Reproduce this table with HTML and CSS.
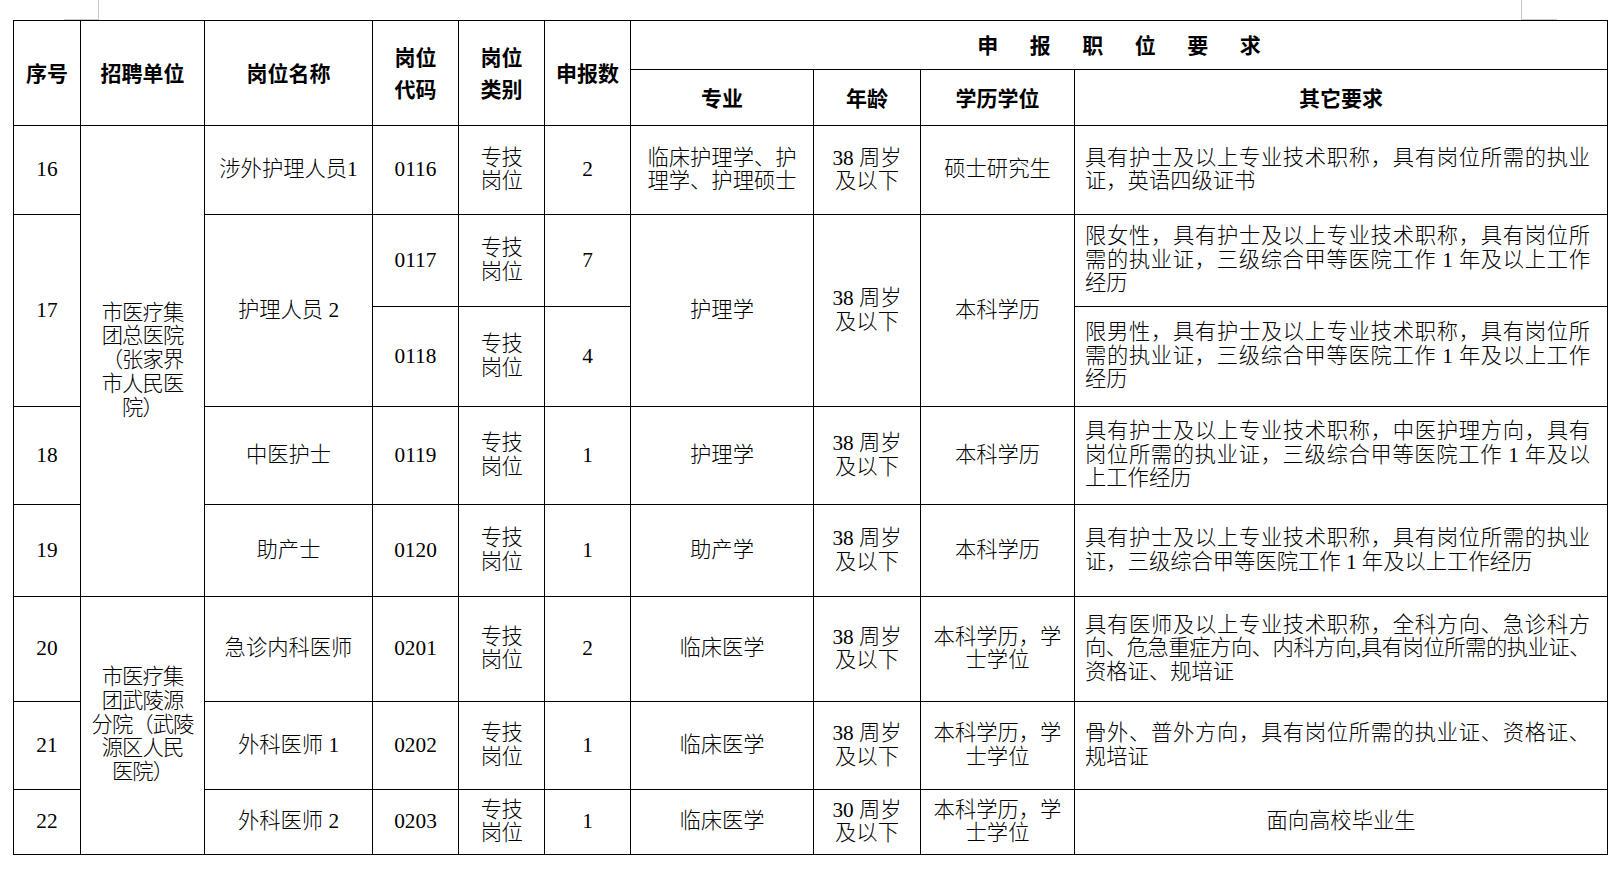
FILE: index.html
```html
<!DOCTYPE html>
<html lang="zh-CN">
<head>
<meta charset="utf-8">
<title>申报职位要求</title>
<link rel="stylesheet" href="styles.css">
</head>
<body>
<div class="marks"><div class="mark mark-l"></div><div class="mark mark-r"></div></div>
<div class="sheet">
  <div class="h r2"><div class="t">序号</div></div>
  <div class="h r2"><div class="t">招聘单位</div></div>
  <div class="h r2"><div class="t">岗位名称</div></div>
  <div class="h r2"><div class="t">岗位<br>代码</div></div>
  <div class="h r2"><div class="t">岗位<br>类别</div></div>
  <div class="h r2"><div class="t">申报数</div></div>
  <div class="h c4"><div class="t wide">申报职位要求</div></div>
  <div class="h"><div class="t">专业</div></div>
  <div class="h"><div class="t">年龄</div></div>
  <div class="h"><div class="t">学历学位</div></div>
  <div class="h"><div class="t">其它要求</div></div>

  <div class="d"><div class="t">16</div></div>
  <div class="d r5"><div class="t unit">市医疗集<br>团总医院<br>（张家界<br>市人民医<br>院）</div></div>
  <div class="d"><div class="t">涉外护理人员1</div></div>
  <div class="d"><div class="t">0116</div></div>
  <div class="d"><div class="t sm">专技<br>岗位</div></div>
  <div class="d"><div class="t">2</div></div>
  <div class="d"><div class="t">临床护理学、护<br>理学、护理硕士</div></div>
  <div class="d"><div class="t">38 周岁<br>及以下</div></div>
  <div class="d"><div class="t">硕士研究生</div></div>
  <div class="o"><div class="t"><span class="j">具有护士及以上专业技术职称，具有岗位所需的执业</span><span>证，英语四级证书</span></div></div>

  <div class="d r2"><div class="t">17</div></div>
  <div class="d r2"><div class="t">护理人员 2</div></div>
  <div class="d"><div class="t">0117</div></div>
  <div class="d"><div class="t sm">专技<br>岗位</div></div>
  <div class="d"><div class="t">7</div></div>
  <div class="d r2"><div class="t">护理学</div></div>
  <div class="d r2"><div class="t">38 周岁<br>及以下</div></div>
  <div class="d r2"><div class="t">本科学历</div></div>
  <div class="o"><div class="t"><span class="j">限女性，具有护士及以上专业技术职称，具有岗位所</span><span class="j">需的执业证，三级综合甲等医院工作 1 年及以上工作</span><span>经历</span></div></div>
  <div class="d"><div class="t">0118</div></div>
  <div class="d"><div class="t sm">专技<br>岗位</div></div>
  <div class="d"><div class="t">4</div></div>
  <div class="o"><div class="t"><span class="j">限男性，具有护士及以上专业技术职称，具有岗位所</span><span class="j">需的执业证，三级综合甲等医院工作 1 年及以上工作</span><span>经历</span></div></div>

  <div class="d"><div class="t">18</div></div>
  <div class="d"><div class="t">中医护士</div></div>
  <div class="d"><div class="t">0119</div></div>
  <div class="d"><div class="t sm">专技<br>岗位</div></div>
  <div class="d"><div class="t">1</div></div>
  <div class="d"><div class="t">护理学</div></div>
  <div class="d"><div class="t">38 周岁<br>及以下</div></div>
  <div class="d"><div class="t">本科学历</div></div>
  <div class="o"><div class="t"><span class="j">具有护士及以上专业技术职称，中医护理方向，具有</span><span class="j">岗位所需的执业证，三级综合甲等医院工作 1 年及以</span><span>上工作经历</span></div></div>

  <div class="d"><div class="t">19</div></div>
  <div class="d"><div class="t">助产士</div></div>
  <div class="d"><div class="t">0120</div></div>
  <div class="d"><div class="t sm">专技<br>岗位</div></div>
  <div class="d"><div class="t">1</div></div>
  <div class="d"><div class="t">助产学</div></div>
  <div class="d"><div class="t">38 周岁<br>及以下</div></div>
  <div class="d"><div class="t">本科学历</div></div>
  <div class="o"><div class="t"><span class="j">具有护士及以上专业技术职称，具有岗位所需的执业</span><span>证，三级综合甲等医院工作 1 年及以上工作经历</span></div></div>

  <div class="d"><div class="t">20</div></div>
  <div class="d r3"><div class="t unit">市医疗集<br>团武陵源<br>分院（武陵<br>源区人民<br>医院）</div></div>
  <div class="d"><div class="t">急诊内科医师</div></div>
  <div class="d"><div class="t">0201</div></div>
  <div class="d"><div class="t sm">专技<br>岗位</div></div>
  <div class="d"><div class="t">2</div></div>
  <div class="d"><div class="t">临床医学</div></div>
  <div class="d"><div class="t">38 周岁<br>及以下</div></div>
  <div class="d"><div class="t">本科学历，学<br>士学位</div></div>
  <div class="o"><div class="t"><span class="j">具有医师及以上专业技术职称，全科方向、急诊科方</span><span class="j tight">向、危急重症方向、内科方向,具有岗位所需的执业证、</span><span>资格证、规培证</span></div></div>

  <div class="d"><div class="t">21</div></div>
  <div class="d"><div class="t">外科医师 1</div></div>
  <div class="d"><div class="t">0202</div></div>
  <div class="d"><div class="t sm">专技<br>岗位</div></div>
  <div class="d"><div class="t">1</div></div>
  <div class="d"><div class="t">临床医学</div></div>
  <div class="d"><div class="t">38 周岁<br>及以下</div></div>
  <div class="d"><div class="t">本科学历，学<br>士学位</div></div>
  <div class="o"><div class="t"><span class="j">骨外、普外方向，具有岗位所需的执业证、资格证、</span><span>规培证</span></div></div>

  <div class="d"><div class="t">22</div></div>
  <div class="d"><div class="t">外科医师 2</div></div>
  <div class="d"><div class="t">0203</div></div>
  <div class="d"><div class="t sm">专技<br>岗位</div></div>
  <div class="d"><div class="t">1</div></div>
  <div class="d"><div class="t">临床医学</div></div>
  <div class="d"><div class="t">30 周岁<br>及以下</div></div>
  <div class="d"><div class="t">本科学历，学<br>士学位</div></div>
  <div class="d"><div class="t">面向高校毕业生</div></div>
</div>
</body>
</html>
```

FILE: styles.css
```css
html, body {
  margin: 0;
  padding: 0;
  background: #ffffff;
}

body {
  font-family: "Liberation Serif", "Noto Sans CJK SC", serif;
  color: #000;
  text-spacing-trim: space-all;
}

.marks {
  display: flex;
  justify-content: space-between;
  height: 20px;
  padding: 0 65px 0 64px;
}

.mark {
  box-sizing: border-box;
  height: 20px;
  border-bottom: 1px solid #c9c9c9;
}

.mark-l {
  width: 35px;
  border-right: 1px solid #c9c9c9;
}

.mark-r {
  width: 36px;
  border-left: 1px solid #c9c9c9;
}

.sheet {
  display: grid;
  grid-template-columns: 67px 124px 168px 86px 86px 86px 183px 107px 154px 533px;
  grid-template-rows: 49px 56px 89px 92px 100px 98px 92px 105px 88px 65px;
  width: 1595px;
  box-sizing: border-box;
  margin-left: 13px;
  border-left: 1px solid #000;
  border-top: 1px solid #000;
}

.sheet > div {
  box-sizing: border-box;
  border-right: 1px solid #000;
  border-bottom: 1px solid #000;
  display: flex;
  align-items: center;
  justify-content: center;
  text-align: center;
  min-width: 0;
}

.r2 { grid-row: span 2; }
.r3 { grid-row: span 3; }
.r5 { grid-row: span 5; }
.c4 { grid-column: span 4; }

.h {
  font-family: "Noto Sans CJK SC", sans-serif;
  font-weight: 700;
  font-size: 21px;
  line-height: 31.6px;
  color: #000;
}

.h .wide {
  letter-spacing: 31.5px;
  padding-left: 31.5px;
}

.d {
  font-size: 21.3px;
  line-height: 23.4px;
  font-weight: 300;
}

.d .sm {
  letter-spacing: -0.5px;
}

.d .unit {
  letter-spacing: -0.9px;
  line-height: 23.7px;
}

.sheet > .o {
  justify-content: flex-start;
  text-align: left;
  font-size: 21.3px;
  line-height: 23.4px;
  font-weight: 300;
  padding: 0 17px 0 10px;
}

.o .t {
  width: 100%;
}

.o .t span {
  display: block;
  white-space: nowrap;
}

.o .t .j {
  text-align: justify;
  text-align-last: justify;
}

.o .t .tight {
  letter-spacing: -0.45px;
}
```
